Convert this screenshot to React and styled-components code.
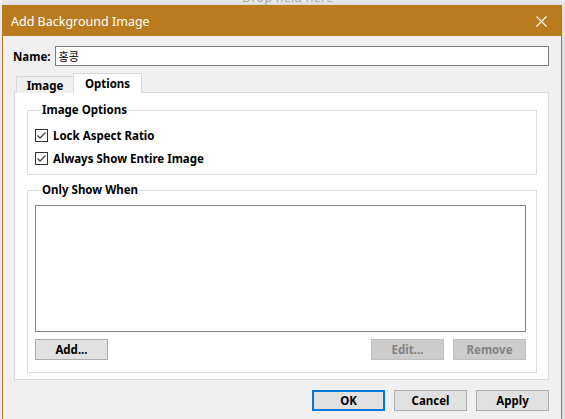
import React from 'react';
import styled, { createGlobalStyle } from 'styled-components';

const GlobalStyle = createGlobalStyle`
  html, body {
    margin: 0;
    padding: 0;
    background: #e9e9e9;
    overflow: hidden;
  }
  body {
    font-family: "Noto Sans", "Noto Sans CJK KR", sans-serif;
    font-size: 12px;
    color: #000;
  }
`;

const Desktop = styled.div`
  width: 565px;
  height: 419px;
  overflow: hidden;
  background: linear-gradient(to right, #f7f7f7 0 2px, #ececec 2px);
`;

const DropHint = styled.div`
  height: 5px;
  overflow: hidden;
  text-align: center;
  padding-left: 10px;

  span {
    display: block;
    margin-top: -10px;
    font-size: 13px;
    line-height: 15px;
    color: #a8a8a8;
  }
`;

const Window = styled.div`
  margin-left: 2px;
  width: 558px;
  border: 1px solid #b87a1f;
  background: #f0f0f0;
  box-shadow: 0 0 6px rgba(0, 0, 0, 0.15);
`;

const TitleBar = styled.div`
  height: 30px;
  background: #b97b1e;
  display: flex;
  align-items: center;
  justify-content: space-between;
  padding: 0 14px 0 8px;
  color: #fff;
  font-size: 12.5px;
`;

const CloseIcon = () => (
  <svg width="11" height="11" viewBox="0 0 11 11">
    <path d="M0.5 0.5 L10.5 10.5 M10.5 0.5 L0.5 10.5" stroke="#fff" strokeWidth="1.1" />
  </svg>
);

const Body = styled.div`
  padding: 10px 12px 12px 10px;
`;

const NameRow = styled.div`
  display: flex;
  align-items: center;
  gap: 4px;
`;

const Label = styled.label`
  font-weight: 700;
  font-size: 11.5px;
`;

const TextInput = styled.div`
  flex: 1;
  height: 18px;
  border: 1px solid #7a7a7a;
  background: #fff;
  display: flex;
  align-items: center;
  padding-left: 3px;
  font-size: 11px;
  font-family: "Noto Sans CJK KR", sans-serif;
`;

const TabBar = styled.div`
  display: flex;
  align-items: flex-end;
  margin-top: 6px;
  padding-left: 3px;
  height: 20px;
`;

const Tab = styled.div`
  height: ${p => (p.$active ? '20px' : '17px')};
  width: ${p => p.$w}px;
  box-sizing: border-box;
  border: 1px solid #d9d9d9;
  border-bottom: none;
  background: ${p => (p.$active ? '#fff' : '#f0f0f0')};
  display: flex;
  align-items: center;
  justify-content: center;
  font-weight: 700;
  font-size: 11.5px;
  margin-left: ${p => (p.$active ? '-1px' : '0')};
  position: relative;
  top: 1px;
`;

const Panel = styled.div`
  margin-left: 1px;
  width: 535px;
  height: 288px;
  box-sizing: border-box;
  border: 1px solid #d9d9d9;
  background: #fff;
  padding: 10px 11px 0 12px;
  display: flex;
  flex-direction: column;
  gap: 8px;
`;

const Group = styled.fieldset`
  margin: 0;
  border: 1px solid #dcdcdc;
  padding: ${p => p.$pad};
  height: ${p => p.$h}px;
  box-sizing: border-box;
  min-width: 0;

  legend {
    font-weight: 700;
    font-size: 11.5px;
    padding: 0 1px;
    margin-left: 6px;
    line-height: 14px;
  }
`;

const CheckRow = styled.div`
  display: flex;
  align-items: center;
  gap: 5px;
  height: 23px;
  font-weight: 700;
  font-size: 11.5px;
`;

const Box = styled.span`
  width: 13px;
  height: 13px;
  box-sizing: border-box;
  border: 1px solid #333;
  background: #fff;
  display: flex;
  align-items: center;
  justify-content: center;
`;

const Tick = () => (
  <svg width="11" height="11" viewBox="0 0 11 11">
    <path d="M1.5 5.5 L4 8 L9.5 2.5" stroke="#444" strokeWidth="1.3" fill="none" />
  </svg>
);

const ListBox = styled.div`
  height: 125px;
  border: 1px solid #828790;
  background: #fff;
`;

const ButtonRow = styled.div`
  display: flex;
  justify-content: flex-end;
  gap: 9px;
  margin-top: ${p => p.$mt || 0}px;
`;

const Spacer = styled.div`
  flex: 1;
`;

const Button = styled.button`
  width: 73px;
  height: 21px;
  box-sizing: border-box;
  margin: 0;
  padding: 0;
  font-family: "Noto Sans", sans-serif;
  font-weight: 700;
  font-size: 11.5px;
  color: ${p => (p.disabled ? '#838383' : '#000')};
  background: ${p => (p.disabled ? '#cccccc' : '#e1e1e1')};
  border: ${p => (p.$default ? '2px solid #0078d7' : p.disabled ? '1px solid #bfbfbf' : '1px solid #adadad')};
`;

export default function App() {
  return (
    <>
      <GlobalStyle />
      <Desktop>
        <DropHint><span>Drop field here</span></DropHint>
        <Window>
          <TitleBar>
            <span>Add Background Image</span>
            <CloseIcon />
          </TitleBar>
          <Body>
            <NameRow>
              <Label>Name:</Label>
              <TextInput>홍콩</TextInput>
            </NameRow>
            <TabBar>
              <Tab $w={58}>Image</Tab>
              <Tab $w={69} $active>Options</Tab>
            </TabBar>
            <Panel>
              <Group $h={72} $pad="7px 7px 0 7px">
                <legend>Image Options</legend>
                <CheckRow><Box><Tick /></Box>Lock Aspect Ratio</CheckRow>
                <CheckRow><Box><Tick /></Box>Always Show Entire Image</CheckRow>
              </Group>
              <Group $h={190} $pad="8px 10px 0 7px">
                <legend>Only Show When</legend>
                <ListBox />
                <ButtonRow $mt={7}>
                  <Button>Add...</Button>
                  <Spacer />
                  <Button disabled>Edit...</Button>
                  <Button disabled>Remove</Button>
                </ButtonRow>
              </Group>
            </Panel>
            <ButtonRow $mt={10}>
              <Button $default>OK</Button>
              <Button>Cancel</Button>
              <Button>Apply</Button>
            </ButtonRow>
          </Body>
        </Window>
      </Desktop>
    </>
  );
}
